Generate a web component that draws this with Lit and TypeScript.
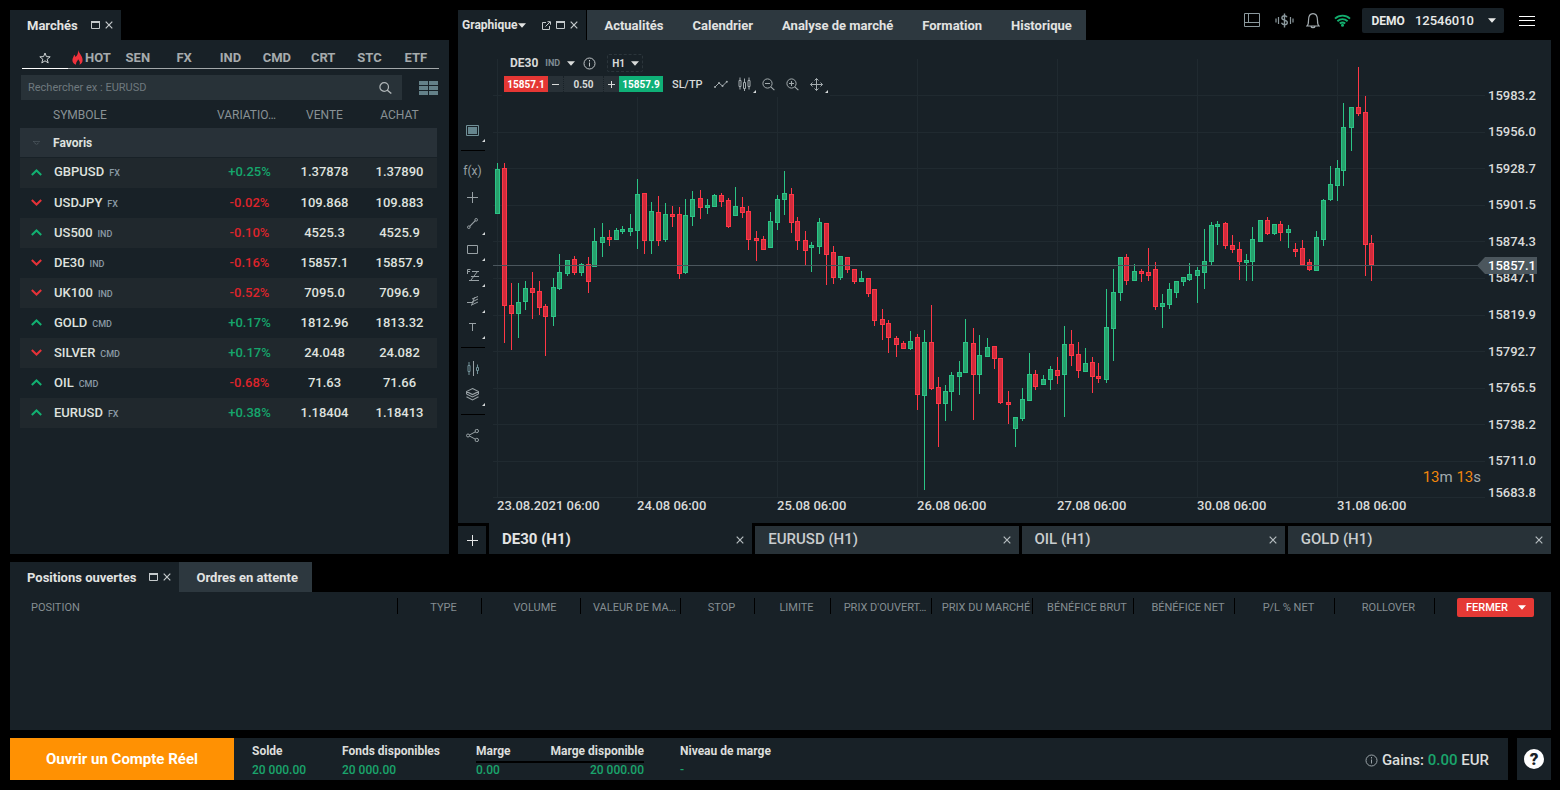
import { LitElement, html, svg, css, nothing } from "lit";
import { customElement } from "lit/decorators.js";
import { classMap } from "lit/directives/class-map.js";

type Candle = [number, number, number, number, number, 0 | 1];

// x, high, body top, body bottom, low, rising
const CANDLES: Candle[] = [
  [497,163,169,214,214,1],[504,163,168,306,343,0],[511,283,305,314,350,0],[518,283,302,314,338,1],
  [525,281,288,302,310,1],[532,272,288,293,319,0],[539,281,291,308,315,0],[545,304,306,317,356,0],
  [553,278,287,317,326,1],[559,254,272,289,290,1],[567,260,260,274,276,1],[574,256,259,273,275,0],
  [581,263,264,273,276,1],[588,257,264,282,293,0],[594,228,241,267,267,1],[602,223,237,243,257,1],
  [609,230,237,240,246,0],[616,228,230,240,240,1],[622,226,229,232,234,1],[630,214,228,232,236,1],
  [637,179,194,231,249,1],[644,193,193,241,254,0],[651,202,211,241,254,1],[658,196,212,241,246,0],
  [665,203,214,240,242,1],[672,206,214,217,227,0],[679,207,214,274,279,0],[685,199,215,273,274,1],
  [692,191,199,217,226,1],[700,190,198,208,219,0],[707,199,205,208,214,1],[714,194,195,207,207,1],
  [721,193,195,202,207,0],[728,198,200,227,228,0],[735,187,206,216,216,1],[742,197,207,213,218,0],
  [748,206,211,240,250,0],[756,231,238,241,261,0],[763,236,239,250,250,0],[770,212,221,248,248,1],
  [777,195,199,223,230,1],[784,171,193,200,215,1],[791,188,194,223,233,0],[797,217,221,241,250,0],
  [805,231,240,251,265,0],[811,242,245,248,272,1],[819,218,222,247,254,1],[826,223,223,255,285,0],
  [833,246,252,278,284,0],[840,256,256,278,280,1],[847,257,257,270,273,0],[854,269,269,282,284,0],
  [861,271,278,282,282,1],[868,278,278,294,297,0],[874,289,289,321,326,0],[882,309,319,325,340,0],
  [888,320,323,338,353,0],[896,336,338,345,357,0],[903,341,343,349,349,0],[910,331,341,349,350,1],
  [917,334,337,395,410,0],[924,330,342,396,490,1],[931,305,342,389,390,0],[938,377,387,404,447,0],
  [945,385,391,404,421,1],[951,372,375,392,411,1],[959,361,372,377,395,1],[965,319,342,373,373,1],
  [973,328,343,375,420,0],[979,335,355,375,394,1],[987,338,347,357,357,1],[994,346,346,359,369,0],
  [1000,358,358,403,404,0],[1008,391,402,405,424,0],[1015,417,417,429,447,1],[1022,388,399,419,421,1],
  [1029,353,374,401,401,1],[1035,370,374,387,390,0],[1043,375,379,385,385,1],[1050,366,369,380,390,1],
  [1057,357,370,376,384,0],[1064,326,344,375,417,1],[1071,330,344,356,366,0],[1078,342,354,371,378,0],
  [1085,348,363,372,372,1],[1092,357,362,377,393,0],[1098,363,376,379,383,0],[1106,289,327,380,383,1],
  [1113,269,292,329,361,1],[1120,257,257,293,301,1],[1126,254,257,281,285,0],[1134,264,271,281,281,1],
  [1141,269,271,274,282,0],[1148,248,272,276,281,0],[1155,262,269,307,310,0],[1162,294,303,307,328,1],
  [1169,283,289,305,309,1],[1176,281,281,293,298,1],[1183,277,277,282,286,1],[1189,263,274,280,281,1],
  [1197,267,270,276,303,1],[1204,229,261,273,289,1],[1211,222,225,262,265,1],[1217,221,224,227,245,1],
  [1225,222,223,246,249,0],[1232,235,245,250,253,0],[1239,242,249,262,280,0],[1246,254,260,263,281,1],
  [1252,227,239,262,281,1],[1260,220,220,242,242,1],[1267,217,220,234,235,0],[1274,224,224,234,235,1],
  [1280,221,224,233,241,0],[1288,225,229,233,248,1],[1295,243,249,252,257,0],[1302,240,248,265,265,0],
  [1309,259,262,270,271,0],[1316,231,237,271,271,1],[1323,199,200,240,246,1],[1330,166,184,200,201,1],
  [1337,160,168,186,201,1],[1343,103,127,171,186,1],[1351,107,107,128,151,1],[1358,67,107,114,116,0],
  [1365,96,112,245,276,0],[1371,235,243,265,281,0],
];
const GRID_X = [497, 637, 777, 917, 1057, 1197, 1337];
const GRID_Y = [95, 132, 168, 205, 241, 278, 315, 351, 388, 424, 461, 497];
const PRICES = ["15983.2","15956.0","15928.7","15901.5","15874.3","15847.1","15819.9","15792.7","15765.5","15738.2","15711.0","15683.8"];
const DATES = ["23.08.2021 06:00","24.08 06:00","25.08 06:00","26.08 06:00","27.08 06:00","30.08 06:00","31.08 06:00"];

const QUOTES = [
  { up: true, name: "GBPUSD", kind: "FX", change: "+0.25%", bid: "1.37878", ask: "1.37890" },
  { up: false, name: "USDJPY", kind: "FX", change: "-0.02%", bid: "109.868", ask: "109.883" },
  { up: true, name: "US500", kind: "IND", change: "-0.10%", bid: "4525.3", ask: "4525.9" },
  { up: false, name: "DE30", kind: "IND", change: "-0.16%", bid: "15857.1", ask: "15857.9" },
  { up: false, name: "UK100", kind: "IND", change: "-0.52%", bid: "7095.0", ask: "7096.9" },
  { up: true, name: "GOLD", kind: "CMD", change: "+0.17%", bid: "1812.96", ask: "1813.32" },
  { up: false, name: "SILVER", kind: "CMD", change: "+0.17%", bid: "24.048", ask: "24.082" },
  { up: true, name: "OIL", kind: "CMD", change: "-0.68%", bid: "71.63", ask: "71.66" },
  { up: true, name: "EURUSD", kind: "FX", change: "+0.38%", bid: "1.18404", ask: "1.18413" },
];

// Each icon: width, height, content
const ICONS: Record<string, [number, number, unknown]> = {
  max: [9, 8, svg`<path d="M.5 .5h8v7h-8z" fill="none" stroke="currentColor"/><path d="M0 0h9v2H0z" fill="currentColor"/>`],
  close: [8, 8, svg`<path d="M.7 .7l6.600 6.600M7.300 .7L.7 7.300" fill="none" stroke="currentColor" stroke-width="1.200"/>`],
  popout: [9, 9, svg`<path d="M4 1.500H.5v7h7V5M3.500 5.500L8 1M5.500 .7h3v3" fill="none" stroke="currentColor"/>`],
  caret: [8, 5, svg`<path d="M0 .3h8L4 4.800z" fill="currentColor"/>`],
  star: [12, 12, svg`<path d="M6 1l1.400 3.600 3.800.2-3 2.400 1 3.700L6 8.800l-3.200 2.100 1-3.700-3-2.400 3.800-.2z" fill="none" stroke="currentColor"/>`],
  flame: [11, 15, svg`<path d="M6.200 0C6.600 3 10.600 5.500 10.600 10c0 2.400-1.300 4-3.200 4.800 1.100-2 .4-3.600-1.300-5.500C5.700 11 4 11.700 3.900 14.700 1.800 14 .4 12.500.4 10.200.4 8 1.700 6.800 2.100 4.800c.9.6 1.300 1.400 1.300 2.300C5.500 5.300 6.300 3 6.200 0z" fill="#f0323c"/>`],
  search: [13, 12, svg`<circle cx="5.200" cy="5" r="4.300" fill="none" stroke="currentColor" stroke-width="1.200"/><path d="M8 8l4.300 3.500" stroke="currentColor" stroke-width="1.400"/>`],
  rows: [19, 14, svg`<path d="M0 0h9v4H0zM10 0h9v4h-9zM0 5h9v4H0zM10 5h9v4h-9zM0 10h9v4H0zM10 10h9v4h-9z" fill="#648189"/>`],
  fold: [7, 5, svg`<path d="M.5 .5h6L3.500 4z" fill="none" stroke="#59646a" stroke-dasharray="1 1"/>`],
  up: [11, 7, svg`<path d="M.8 6l4.700-4.500L10.200 6" fill="none" stroke="#12b071" stroke-width="2"/>`],
  down: [11, 7, svg`<path d="M.8 1l4.700 4.500L10.200 1" fill="none" stroke="#e53238" stroke-width="2"/>`],
  layout: [17, 15, svg`<path d="M.5 .5h15v13H.5zM4.500 .5v9M.5 9.500h15" fill="none" stroke="currentColor"/>`],
  dollar: [19, 15, svg`<path d="M12 4.300C11.500 3.200 10.500 2.800 9.400 2.800 7.900 2.800 6.900 3.600 6.900 4.900c0 3 5.400 1.300 5.400 4.500 0 1.400-1.100 2.300-2.800 2.300-1.500 0-2.500-.6-3-1.900M9.500 .5v14" fill="none" stroke="currentColor" stroke-width="1.400"/><path d="M3.500 4v7M1 5.500v4M15.500 4v7M18 5.500v4" stroke="currentColor" stroke-width="1.200"/>`],
  bell: [14, 16, svg`<path d="M1 13c1.500-1.200 1.500-2.600 1.500-5.500C2.500 3.500 4 .7 7 .7s4.500 2.800 4.500 6.800c0 2.900 0 4.300 1.500 5.500zM5 13.500c.4 1.500 3.600 1.500 4 0" fill="none" stroke="currentColor" stroke-width="1.200"/>`],
  wifi: [17, 13, svg`<path d="M1 4.600c4.300-4 10.700-4 15 0M3.400 7.200c3-2.700 7.200-2.700 10.200 0M5.800 9.600c1.700-1.400 3.700-1.400 5.400 0" fill="none" stroke="#13ae6e" stroke-width="1.900"/><circle cx="8.500" cy="11.300" r="1.500" fill="#13ae6e"/>`],
  menu: [16, 10, svg`<path d="M0 .5h16M0 4.500h16M0 9.500h16" stroke="currentColor"/>`],
  info: [13, 13, svg`<circle cx="6.500" cy="6.500" r="5.500" fill="none" stroke="currentColor"/><path d="M6.500 5.500v4M6.500 3v1.500" stroke="currentColor"/>`],
  plus: [11, 11, svg`<path d="M5.500 0v11M0 5.500h11" stroke="currentColor"/>`],
  smallplus: [7, 7, svg`<path d="M3.500 0v7M0 3.500h7" stroke="currentColor"/>`],
  minus: [7, 7, svg`<path d="M0 3.500h7" stroke="currentColor"/>`],
  line: [14, 9, svg`<path d="M1 7l4-4 3.500 3L13 1.500" fill="none" stroke="currentColor"/><g fill="currentColor"><circle cx="1" cy="7" r="1"/><circle cx="5" cy="3" r="1"/><circle cx="8.500" cy="6" r="1"/><circle cx="12.800" cy="1.700" r="1"/></g>`],
  candles: [13, 14, svg`<path d="M1 3.500h2v6H1zM5.500 5.500h2v6h-2zM10 3.500h2v6h-2zM2 .5v3M2 9.500v3M6.500 1.500v4M6.500 11.500v2.500M11 .5v3M11 9.500v3" fill="none" stroke="currentColor"/>`],
  zoomout: [13, 13, svg`<circle cx="5.500" cy="5.500" r="4.600" fill="none" stroke="currentColor"/><path d="M3 5.500h5M8.800 8.800l3.600 3.400" stroke="currentColor" stroke-width="1.100"/>`],
  zoomin: [13, 13, svg`<circle cx="5.500" cy="5.500" r="4.600" fill="none" stroke="currentColor"/><path d="M3 5.500h5M5.500 3v5M8.800 8.800l3.600 3.400" stroke="currentColor" stroke-width="1.100"/>`],
  move: [13, 13, svg`<path d="M6.500 .5v12M.5 6.500h12M4.500 2.500l2-2 2 2M4.500 10.500l2 2 2-2M2.500 4.500l-2 2 2 2M10.500 4.500l2 2-2 2" fill="none" stroke="currentColor"/>`],
  screen: [13, 11, svg`<path d="M.5 .5h12v10H.5z" fill="none" stroke="#719198"/><path d="M2 2h9v7H2z" fill="#66868e"/>`],
  trend: [11, 11, svg`<circle cx="1.800" cy="9.200" r="1.300" fill="none" stroke="currentColor"/><circle cx="9.200" cy="1.800" r="1.300" fill="none" stroke="currentColor"/><path d="M2.700 8.300l5.600-5.600" stroke="currentColor" stroke-width="1.200"/>`],
  rect: [11, 9, svg`<path d="M.5 .5h10v8H.5z" fill="none" stroke="currentColor"/>`],
  fibo: [12, 12, svg`<path d="M2 11.500h10M4 7.500h8M5 2.500h7M10.500 2.500L4 11M.5 5V.5h3M.5 2.500H3" fill="none" stroke="currentColor"/>`],
  fork: [11, 10, svg`<path d="M0 6.500h6.500M4.500 9.500L7.500 1.500M5 3L11 .5M5 6L11 3M4.500 9L11 6" fill="none" stroke="currentColor"/>`],
  text: [7, 8, svg`<path d="M0 .5h7M3.500 .5V8" stroke="currentColor"/>`],
  compare: [12, 15, svg`<path d="M1 4.500h2v6H1zM2 1v3.500M2 10.500V14M9.500 6.500h2v3h-2zM10.500 3.500v3M10.500 9.500V13" fill="none" stroke="#719198"/><path d="M6.500 0v15" stroke="currentColor"/>`],
  layers: [13, 13, svg`<path d="M6.500 .6l6 3-6 3-6-3zM.5 6l6 3 6-3M.5 8.800l6 3.200 6-3.200M.5 3.600V6M12.500 3.600V6" fill="none" stroke="currentColor" stroke-width="1.100"/>`],
  share: [13, 13, svg`<path d="M2.500 6.500l8-4.300M2.500 6.500l8 4.300" stroke="currentColor"/><g fill="#182127" stroke="currentColor"><circle cx="2" cy="6.500" r="1.500"/><circle cx="10.800" cy="2" r="1.700"/><circle cx="10.800" cy="11" r="1.700"/></g>`],
  corner: [3, 3, svg`<path d="M3 0v3H0z" fill="#d5d9da"/>`],
};
const icon = (name: string) => {
  const [w, h, body] = ICONS[name];
  return html`<svg width=${w} height=${h} viewBox="0 0 ${w} ${h}" aria-hidden="true">${body}</svg>`;
};

const base = css`
  * { box-sizing: border-box; }
  button, input, select {
    font: inherit; color: inherit; background: none; border: 0; padding: 0; margin: 0;
  }
  button { cursor: pointer; display: inline-flex; align-items: center; justify-content: center; white-space: nowrap; }
  svg { display: block; flex: none; }
  .tabs { display: flex; align-items: flex-end; height: 30px; flex: none; }
  .tab {
    height: 30px; display: flex; align-items: center; background: #2d383f; color: #e2e3e2;
    font-weight: 700; font-size: 13px; white-space: nowrap; padding: 0 17px;
  }
  .tab.active { background: #182127; padding-right: 8px; }
  .tab .ctl { color: #c5cacc; }
  .controls { display: flex; gap: 5px; align-items: center; margin-left: 13px; }
`;

@customElement("market-list")
class MarketList extends LitElement {
  static styles = [base, css`
    :host { display: flex; flex-direction: column; min-height: 0; }
    .panel { flex: 1; background: #182127; padding: 5px 10px 0 10px; }
    .cats { display: grid; grid-template-columns: repeat(9, 1fr); margin: 0 0 0 2px; border-bottom: 1px solid #a3a8aa; height: 24px; }
    .cat { font-weight: 700; font-size: 13px; color: #a6abad; gap: 2px; height: 24px; padding-top: 2px; border-bottom: 1px solid transparent; }
    .cat.on { border-color: #fff; color: #cdd2d3; }
    .find { display: flex; align-items: center; gap: 17px; margin: 6px 1px 0; }
    .box { flex: 1; display: flex; align-items: center; height: 25px; background: #283238; padding-right: 10px; color: #b1b7b9; }
    .box input { flex: 1; min-width: 0; padding: 0 7px; font-size: 11px; outline: 0; }
    .box input::placeholder { color: #6f797e; opacity: 1; }
    table { width: 100%; border-collapse: collapse; table-layout: fixed; }
    .wrap { padding-right: 2px; }
    .c0 { width: 33px; } .cn { width: 75px; }
    th { font-weight: 400; font-size: 12px; color: #899195; height: 28px; padding: 2px 0 0; text-align: center; }
    th.left { text-align: left; }
    th.clip { text-align: left; padding-left: 5px; }
    td { height: 30px; padding: 0 0 2px; text-align: center; font-size: 13px; font-weight: 500; color: #dfe1df; }
    td.left { text-align: left; white-space: nowrap; }
    .arrow svg { margin: 1px auto 0; }
    .group td { height: 29px; background: #283138; font-size: 12px; font-weight: 700; padding: 1px 0 0; }
    .row td { background-clip: padding-box; }
    .row:nth-child(even) td { background: #20282d; }
    .row:nth-child(2) td { border-top: 1px solid #182127; height: 31px; }
    .sym { font-weight: 500; padding-left: 1px; }
    .kind { font-size: 9px; color: #8b9aa5; margin-left: 5px; }
    td.pos { color: #15a66c; } td.neg { color: #dd242b; }
  `];
  render() {
    return html`
      <div class="tabs"><div class="tab active">Marchés
        <span class="controls"><button class="ctl" aria-label="Agrandir">${icon("max")}</button><button class="ctl" aria-label="Fermer">${icon("close")}</button></span>
      </div></div>
      <div class="panel">
        <nav class="cats">
          <button class="cat on" aria-label="Favoris">${icon("star")}</button>
          <button class="cat">${icon("flame")}HOT</button>
          ${["SEN", "FX", "IND", "CMD", "CRT", "STC", "ETF"].map((c) => html`<button class="cat">${c}</button>`)}
        </nav>
        <div class="find">
          <label class="box"><input type="text" aria-label="Rechercher" placeholder="Rechercher ex : EURUSD">${icon("search")}</label>
          <button aria-label="Affichage">${icon("rows")}</button>
        </div>
        <div class="wrap"><table>
          <colgroup><col class="c0"><col><col class="cn"><col class="cn"><col class="cn"></colgroup>
          <thead><tr><th></th><th class="left">SYMBOLE</th><th class="clip">VARIATIO…</th><th>VENTE</th><th>ACHAT</th></tr></thead>
          <tbody>
            <tr class="group"><td class="arrow">${icon("fold")}</td><td class="left" colspan="4">Favoris</td></tr>
            ${QUOTES.map((q) => html`<tr class="row">
              <td class="arrow">${icon(q.up ? "up" : "down")}</td>
              <td class="left"><span class="sym">${q.name}</span><span class="kind">${q.kind}</span></td>
              <td class=${q.change[0] === "+" ? "pos" : "neg"}>${q.change}</td><td>${q.bid}</td><td>${q.ask}</td>
            </tr>`)}
          </tbody>
        </table></div>
      </div>`;
  }
}

@customElement("price-plot")
class PricePlot extends LitElement {
  static styles = [base, css`
    :host { display: grid; grid-template-columns: minmax(0, 1fr) 66px; flex: 1; min-width: 0; }
    .left { display: flex; flex-direction: column; min-width: 0; }
    .plot { position: relative; flex: 1; min-height: 0; }
    .canvas { position: absolute; inset: 0; width: 100%; height: 100%; }
    .dates { display: grid; grid-template-columns: 4fr repeat(7, 140fr) 8fr; height: 25px; color: #d9dbda; font-size: 13px; font-weight: 500; line-height: 16px; }
    .date { min-width: 0; white-space: nowrap; }
    .axis { display: grid; grid-template-rows: repeat(11, 73fr) 54fr; padding: 37px 0 17px 3px; align-items: center; font-size: 13px; font-weight: 500; color: #d9dbda; }
    .tag { position: absolute; left: calc(100% - 8px); margin-top: -8px; height: 17px; width: 60px; padding-left: 11px; background: #4b565d; color: #fff; font-size: 13px; font-weight: 500; line-height: 17px; clip-path: polygon(0 50%, 8px 0, 100% 0, 100% 100%, 8px 100%); }
    .timer { position: absolute; right: 4px; bottom: 12px; font-size: 15px; line-height: 18px; color: #a3abae; }
    .timer b { color: #f0860c; font-weight: 400; }
    .heading { position: absolute; left: 9px; top: 13px; width: 328px; background: #182127; padding: 0 0 5px 2px; color: #d9dbda; }
    .line { display: flex; align-items: center; height: 20px; }
    .line.trade { height: 16px; margin-top: 3px; }
    .symbol { font-size: 12px; font-weight: 700; margin-left: 6px; gap: 7px; }
    .symbol small { font-size: 9px; font-weight: 700; color: #7f8c93; }
    .info { margin-left: 8px; color: #c0c5c7; }
    .period { display: flex; align-items: center; margin-left: 11px; height: 18px; width: 36px; border: 1px dashed #2b353b; border-radius: 2px; font-size: 10px; font-weight: 700; padding-left: 4px; }
    .period select { appearance: none; width: 19px; outline: 0; }
    .buy, .sell { width: 44px; height: 16px; font-size: 10px; font-weight: 700; color: #fff; }
    .sell { background: #e53734; } .buy { background: #0fb077; }
    .qty { display: flex; width: 71px; height: 16px; background: #283137; }
    .qty button { width: 15px; }
    .qty input { flex: 1; min-width: 0; text-align: center; font-size: 10px; font-weight: 700; border: dotted #182127; border-width: 0 1px; outline: 0; }
    .sltp { font-size: 11px; font-weight: 500; margin: 0 6px 0 9px; }
    .act { width: 24px; height: 16px; color: #a3abae; position: relative; }
    .act .more { position: absolute; right: 1px; bottom: -1px; }
  `];
  render() {
    return html`
      <div class="left">
        <div class="plot">
          <svg class="canvas" viewBox="493 40 992 458" preserveAspectRatio="none" shape-rendering="crispEdges">
            ${GRID_Y.map((y) => svg`<rect x="493" y=${y} width="992" height="1" fill="#202a30"/>`)}
            ${GRID_X.map((x) => svg`<rect x=${x} y="59" width="1" height="439" fill="#202a30"/>`)}
            ${CANDLES.map(([x, hi, top, bot, lo, up]) => {
              const edge = up ? "#2bc486" : "#ff3746";
              return svg`<rect x=${x} y=${hi} width="1" height=${lo - hi} fill=${edge}/>
                <rect x=${x - 2} y=${top} width="5" height=${bot - top} fill=${edge}/>
                <rect x=${x - 1} y=${top + 1} width="3" height=${bot - top - 2} fill=${up ? "#27a06c" : "#d12b3c"}/>`;
            })}
            <rect x="493" y="265" width="986" height="1" fill="#4b565d"/>
          </svg>
          <div class="heading">
            <div class="line">
              <button class="symbol">DE30 <small>IND</small>${icon("caret")}</button>
              <button class="info" aria-label="Informations">${icon("info")}</button>
              <label class="period"><select aria-label="Période"><option>H1</option></select>${icon("caret")}</label>
            </div>
            <div class="line trade">
              <button class="sell">15857.1</button>
              <span class="qty"><button aria-label="Moins">${icon("minus")}</button><input aria-label="Volume" value="0.50"><button aria-label="Plus">${icon("smallplus")}</button></span>
              <button class="buy">15857.9</button>
              <button class="sltp">SL/TP</button>
              ${["line", "candles", "zoomout", "zoomin", "move"].map((n) => html`<button class="act" aria-label=${n}>${icon(n)}
                ${n === "candles" || n === "move" ? html`<span class="more">${icon("corner")}</span>` : nothing}</button>`)}
            </div>
          </div>
          <div class="timer"><b>13</b>m <b>13</b>s</div>
          <div class="tag" style="top:${((265 - 40) / 458) * 100}%">15857.1</div>
        </div>
        <div class="dates"><span></span>${DATES.map((d) => html`<span class="date">${d}</span>`)}</div>
      </div>
      <div class="axis">${PRICES.map((p) => html`<span>${p}</span>`)}</div>`;
  }
}

@customElement("chart-window")
class ChartWindow extends LitElement {
  static styles = [base, css`
    :host { display: flex; flex-direction: column; min-height: 0; min-width: 0; }
    .top { display: flex; justify-content: space-between; height: 32px; margin-top: -2px; flex: none; }
    .tabs { margin-top: 2px; }
    .tab.first { padding: 0 8px 0 4px; margin-right: 1px; }
    .first .name { font-weight: 700; font-size: 12px; gap: 1px; }
    .first .controls { margin-left: 16px; }
    .others { display: flex; background: #2d383f; height: 30px; padding: 0 14px 0 17px; gap: 29px; }
    .others .tab { padding: 0; background: none; }
    .tools { display: flex; align-items: center; height: 25px; color: #8b989d; }
    .tools > * { margin-left: 14px; }
    .tools .bell { margin-left: 12px; color: #a3acb0; }
    .account { height: 25px; background: #182127; color: #e9eae9; padding: 0 8px 0 10px; font-size: 12px; font-weight: 700; border-radius: 2px; }
    .account .num { font-size: 13px; font-weight: 500; margin: 0 14px 0 10px; }
    .tools .account { margin-left: 11px; }
    .tools .menu { margin: 0 16px 0 15px; color: #fff; }
    .body { display: flex; flex: 1; min-height: 0; background: #182127; }
    .rail { width: 28px; margin-right: 7px; padding: 77px 0 0 1px; display: flex; flex-direction: column; color: #98a1a5; }
    .tool { height: 26px; width: 27px; position: relative; flex: none; font-size: 12px; }
    .tool .more { position: absolute; right: 1px; bottom: 1px; }
    .rule { height: 1px; margin: 7px 1px 7px 2px; background: #000; flex: none; }
    .files { display: flex; gap: 3px; height: 31px; flex: none; }
    .add { width: 28px; margin-top: 3px; background: #182127; color: #e4e6e6; }
    .file { flex: 1; min-width: 0; display: flex; align-items: center; justify-content: space-between; margin-top: 3px; padding: 0 8px 3px 13px; background: #283238; color: #c9cdce; font-size: 15px; font-weight: 500; }
    .file.on { margin-top: 0; padding-top: 3px; background: #182127; color: #e4e5e4; font-weight: 700; }
    .file .x { color: #b6bdc0; padding-top: 3px; }
  `];
  tool(name: string, more = false) {
    return html`<button class="tool" aria-label=${name}>${name === "fx" ? "f(x)" : icon(name)}${more ? html`<span class="more">${icon("corner")}</span>` : nothing}</button>`;
  }
  render() {
    return html`
      <div class="top">
        <div class="tabs">
          <div class="tab active first"><button class="name">Graphique${icon("caret")}</button>
            <span class="controls">${["popout", "max", "close"].map((n) => html`<button class="ctl" aria-label=${n}>${icon(n)}</button>`)}</span>
          </div>
          <div class="others">${["Actualités", "Calendrier", "Analyse de marché", "Formation", "Historique"].map((t) => html`<button class="tab">${t}</button>`)}</div>
        </div>
        <div class="tools">
          <button aria-label="Disposition">${icon("layout")}</button>
          <button aria-label="Dépôt">${icon("dollar")}</button>
          <button class="bell" aria-label="Alertes">${icon("bell")}</button>
          <button aria-label="Connexion">${icon("wifi")}</button>
          <button class="account">DEMO<span class="num">12546010</span>${icon("caret")}</button>
          <button class="menu" aria-label="Menu">${icon("menu")}</button>
        </div>
      </div>
      <div class="body">
        <div class="rail">
          ${this.tool("screen", true)}<div class="rule"></div>
          ${this.tool("fx")}${this.tool("plus")}${["trend", "rect", "fibo", "fork", "text"].map((n) => this.tool(n, true))}
          <div class="rule"></div>${this.tool("compare")}${this.tool("layers", true)}
          <div class="rule"></div>${this.tool("share")}
        </div>
        <price-plot></price-plot>
      </div>
      <div class="files">
        <button class="add" aria-label="Ajouter">${icon("plus")}</button>
        ${["DE30 (H1)", "EURUSD (H1)", "OIL (H1)", "GOLD (H1)"].map((f, i) => html`<div class=${classMap({ file: true, on: i === 0 })}><span>${f}</span><button class="x" aria-label="Fermer">${icon("close")}</button></div>`)}
      </div>`;
  }
}

@customElement("positions-panel")
class PositionsPanel extends LitElement {
  static styles = [base, css`
    :host { display: flex; flex-direction: column; height: 168px; flex: none; }
    .panel { flex: 1; background: #182127; }
    .tab.idle { padding: 0 14px 0 17px; }
    table { width: 100%; table-layout: fixed; border-collapse: collapse; }
    th { padding: 0; font-size: 11px; font-weight: 400; color: #858e92; height: 28px; white-space: nowrap; }
    .cell { display: block; height: 16px; line-height: 20px; border-right: 1px solid #000; padding-left: 8px; overflow: hidden; }
    .cell.start { text-align: left; padding-left: 21px; }
    th.end { padding-left: 6px; }
    .close { width: 77px; height: 19px; gap: 10px; border-radius: 2px; background: #e53935; color: #fff; font-weight: 500; font-size: 11px; margin-top: 2px; }
  `];
  render() {
    const cols: [string, number][] = [["POSITION", 388], ["TYPE", 84], ["VOLUME", 99], ["VALEUR DE MA…", 100], ["STOP", 74], ["LIMITE", 76], ["PRIX D'OUVERT…", 101], ["PRIX DU MARCHÉ", 101], ["BÉNÉFICE BRUT", 101], ["BÉNÉFICE NET", 101], ["P/L % NET", 100], ["ROLLOVER", 100]];
    return html`
      <div class="tabs">
        <div class="tab active">Positions ouvertes<span class="controls"><button class="ctl" aria-label="Agrandir">${icon("max")}</button><button class="ctl" aria-label="Fermer">${icon("close")}</button></span></div>
        <button class="tab idle">Ordres en attente</button>
      </div>
      <div class="panel"><table>
        <colgroup>${cols.map(([, w]) => html`<col style="width:${(w / 1541) * 100}%">`)}<col></colgroup>
        <thead><tr>${cols.map(([t], i) => html`<th><span class=${classMap({ cell: true, start: i === 0 })}>${t}</span></th>`)}
          <th class="end"><button class="close">FERMER ${icon("caret")}</button></th></tr></thead>
      </table></div>`;
  }
}

@customElement("account-bar")
class AccountBar extends LitElement {
  static styles = [base, css`
    :host { display: flex; height: 42px; flex: none; }
    .open { width: 224px; background: #ff9103; color: #fff; font-size: 15px; font-weight: 700; }
    .info { flex: 1; display: flex; background: #182127; padding: 2px 19px 0 18px; align-items: center; margin-right: 9px; }
    .stat { display: flex; flex-direction: column; font-size: 12px; font-weight: 700; line-height: 20px; color: #dcdedc; white-space: nowrap; }
    .stat .v { font-size: 12px; font-weight: 500; line-height: 18px; color: #1aa56c; }
    .s1 { width: 90px; } .s2 { width: 134px; }
    .pair { display: flex; width: 168px; justify-content: space-between; margin-right: 36px; background: linear-gradient(#000, #000) 0 20px / 100% 2px no-repeat; }
    .right { text-align: right; }
    .gain { margin-left: auto; display: flex; align-items: center; gap: 4px; font-size: 15px; font-weight: 500; color: #dcdedc; }
    .gain svg { color: #9aa3a7; } .gain b { color: #1aa56c; font-weight: 500; }
    .help { width: 34px; background: #182127; }
    .mark { width: 20px; height: 20px; border-radius: 50%; background: #fff; color: #182127; font-size: 17px; line-height: 20px; font-weight: 900; }
  `];
  render() {
    const stat = (label: string, v: string, c: string) => html`<div class="stat ${c}"><span>${label}</span><span class="v">${v}</span></div>`;
    return html`
      <button class="open">Ouvrir un Compte Réel</button>
      <div class="info">
        ${stat("Solde", "20 000.00", "s1")}${stat("Fonds disponibles", "20 000.00", "s2")}
        <div class="pair">${stat("Marge", "0.00", "")}${stat("Marge disponible", "20 000.00", "right")}</div>
        ${stat("Niveau de marge", "-", "")}
        <div class="gain">${icon("info")}<span>Gains: <b>0.00</b> EUR</span></div>
      </div>
      <button class="help" aria-label="Aide"><span class="mark">?</span></button>`;
  }
}

@customElement("app-root")
class AppRoot extends LitElement {
  static styles = css`
    :host {
      display: flex; flex-direction: column; gap: 8px; box-sizing: border-box; height: 100vh;
      padding: 10px 9px 10px 10px; background: #000; font-family: Roboto, "Liberation Sans", sans-serif; font-size: 12px;
    }
    .main { flex: 1; min-height: 0; display: grid; grid-template-columns: 439px minmax(0, 1fr); gap: 9px; }
  `;
  render() {
    return html`<div class="main"><market-list></market-list><chart-window></chart-window></div>
      <positions-panel></positions-panel><account-bar></account-bar>`;
  }
}
